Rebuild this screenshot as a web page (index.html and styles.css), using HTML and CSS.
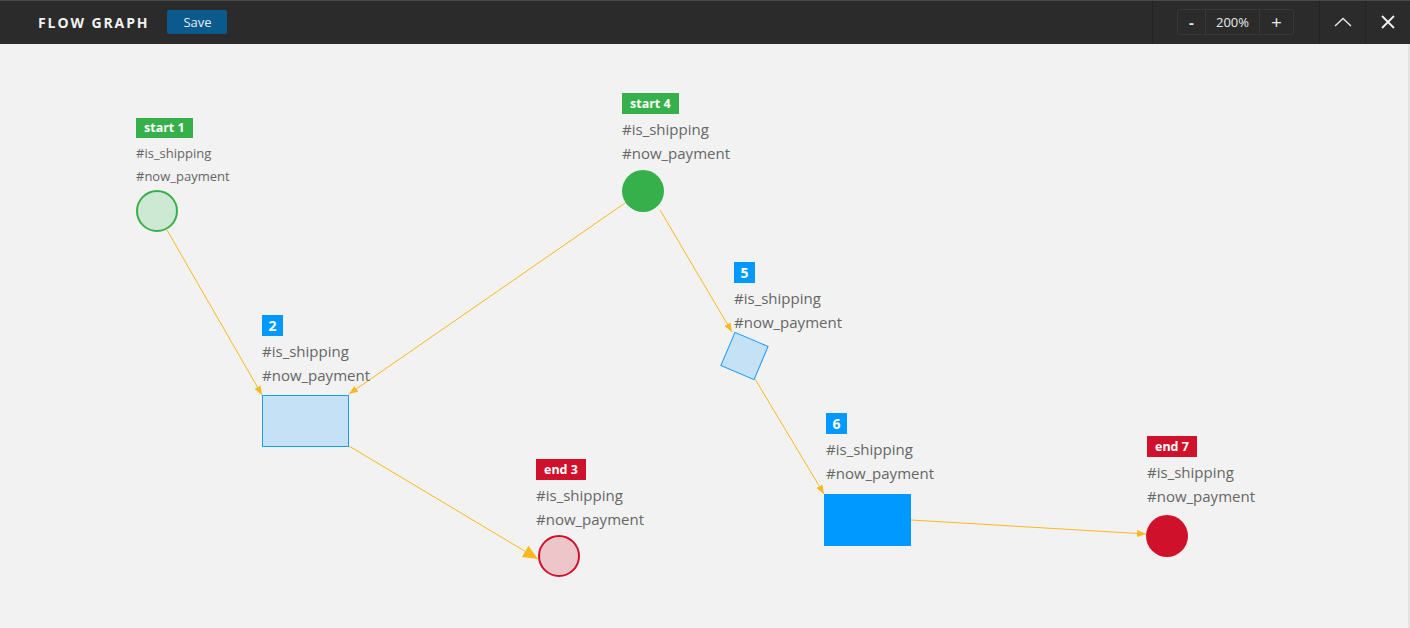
FILE: index.html
```html
<!DOCTYPE html>
<html>
<head>
<meta charset="utf-8">
<link rel="stylesheet" href="styles.css">
</head>
<body>
<div class="app">
  <header class="topbar">
    <div class="brand">
      <span class="title">FLOW GRAPH</span>
      <button class="save">Save</button>
    </div>
    <div class="tools">
      <div class="zoom-cell">
        <div class="zoom">
          <span class="zbtn minus">-</span>
          <span class="zval">200%</span>
          <span class="zbtn plus">+</span>
        </div>
      </div>
      <div class="icon-cell">
        <svg width="18" height="10" viewBox="0 0 18 10"><path d="M1 9 L9 1.5 L17 9" fill="none" stroke="#e8e8e8" stroke-width="1.4"/></svg>
      </div>
      <div class="icon-cell close">
        <svg width="14" height="14" viewBox="0 0 14 14"><path d="M1 1 L13 13 M13 1 L1 13" fill="none" stroke="#f0f0f0" stroke-width="1.8"/></svg>
      </div>
    </div>
  </header>
  <main class="canvas">
    <svg class="graph" width="1410" height="584" viewBox="0 44 1410 584">
      <defs>
        <marker id="sm" markerUnits="userSpaceOnUse" markerWidth="10" markerHeight="8" refX="9" refY="4" orient="auto">
          <path d="M0 0.5 L9 4 L0 7.5 Z" fill="#f9b91c"/>
        </marker>
        <marker id="lg" markerUnits="userSpaceOnUse" markerWidth="16" markerHeight="14" refX="15" refY="7" orient="auto">
          <path d="M0 0.5 L15 7 L0 13.5 Z" fill="#f9b91c"/>
        </marker>
      </defs>
      <g stroke="#f9b91c" stroke-width="1" fill="none">
        <line x1="167" y1="230" x2="262" y2="395" marker-end="url(#sm)"/>
        <line x1="625" y1="203" x2="349" y2="394" marker-end="url(#sm)"/>
        <line x1="660" y1="210" x2="732" y2="332" marker-end="url(#sm)"/>
        <line x1="349" y1="446" x2="538" y2="559" marker-end="url(#lg)"/>
        <line x1="755" y1="379" x2="824" y2="494" marker-end="url(#sm)"/>
        <line x1="911" y1="520" x2="1146" y2="534" marker-end="url(#sm)"/>
      </g>
      <circle cx="157" cy="211" r="20" fill="#cde8d3" stroke="#38b04a" stroke-width="2"/>
      <circle cx="643" cy="191" r="21" fill="#36b04a"/>
      <rect x="262.5" y="395.5" width="86" height="51" fill="#c4e1f5" stroke="#1a9cf5" stroke-width="1"/>
      <rect x="726.5" y="338" width="36" height="36" fill="#c4e1f5" stroke="#1a9cf5" stroke-width="1" transform="rotate(23 744.5 356)"/>
      <rect x="824" y="494" width="87" height="52" fill="#0099ff"/>
      <circle cx="559" cy="556" r="20" fill="#edc6ca" stroke="#d0112b" stroke-width="2"/>
      <circle cx="1167" cy="536" r="21" fill="#d0112b"/>
    </svg>

    <div class="node small n1">
      <span class="badge green">start 1</span>
      <span class="tag">#is_shipping</span>
      <span class="tag">#now_payment</span>
    </div>
    <div class="node n4">
      <span class="badge green">start 4</span>
      <span class="tag">#is_shipping</span>
      <span class="tag">#now_payment</span>
    </div>
    <div class="node n2">
      <span class="badge blue">2</span>
      <span class="tag">#is_shipping</span>
      <span class="tag">#now_payment</span>
    </div>
    <div class="node n5">
      <span class="badge blue">5</span>
      <span class="tag">#is_shipping</span>
      <span class="tag">#now_payment</span>
    </div>
    <div class="node n6">
      <span class="badge blue">6</span>
      <span class="tag">#is_shipping</span>
      <span class="tag">#now_payment</span>
    </div>
    <div class="node n3">
      <span class="badge red">end 3</span>
      <span class="tag">#is_shipping</span>
      <span class="tag">#now_payment</span>
    </div>
    <div class="node n7">
      <span class="badge red">end 7</span>
      <span class="tag">#is_shipping</span>
      <span class="tag">#now_payment</span>
    </div>
  </main>
</div>
</body>
</html>
```

FILE: styles.css
```css
* { box-sizing: border-box; }
html, body {
  margin: 0;
  padding: 0;
  width: 1410px;
  height: 628px;
  overflow: hidden;
  font-family: "Open Sans", "Liberation Sans", sans-serif;
}
.app {
  display: flex;
  flex-direction: column;
  height: 628px;
}
.topbar {
  height: 44px;
  flex: none;
  background: #2b2b2b;
  border-top: 1px solid #4a4a4a;
  display: flex;
  align-items: stretch;
  justify-content: space-between;
}
.brand {
  display: flex;
  align-items: center;
  padding-left: 38px;
  gap: 18px;
}
.title {
  color: #f2f2f2;
  font-weight: 700;
  font-size: 14px;
  letter-spacing: 1.9px;
}
.save {
  height: 24px;
  width: 60px;
  border: none;
  border-radius: 2px;
  background: #0b5a8d;
  color: #e6eef4;
  font-family: "Open Sans", "Liberation Sans", sans-serif;
  font-size: 13px;
  padding: 0;
  margin-top: -2px;
}
.tools {
  display: flex;
  align-items: stretch;
}
.zoom-cell {
  width: 167px;
  border-left: 1px solid #232323;
  display: flex;
  align-items: center;
  padding-left: 24px;
}
.zoom {
  display: flex;
  height: 26px;
  border: 1px solid #383838;
  border-radius: 2px;
  color: #eaeaea;
  font-size: 13px;
  margin-top: -2px;
}
.zbtn, .zval {
  display: flex;
  align-items: center;
  justify-content: center;
}
.zbtn.minus { width: 28px; border-right: 1px solid #383838; font-weight: 700; font-size: 15px; }
.zval { width: 54px; border-right: 1px solid #383838; }
.zbtn.plus { width: 33px; font-size: 19px; }
.icon-cell {
  width: 46px;
  border-left: 1px solid #232323;
  display: flex;
  align-items: center;
  justify-content: center;
  padding-bottom: 2px;
}
.icon-cell.close { width: 45px; }
.canvas {
  position: relative;
  flex: 1;
  background: #f2f2f2;
  border-right: 2px solid #e4e4e4;
}
.graph {
  position: absolute;
  left: 0;
  top: 0;
}
.node {
  position: absolute;
  display: flex;
  flex-direction: column;
  align-items: flex-start;
  color: #666;
  font-size: 15px;
  line-height: 23.5px;
}
.node .badge {
  height: 21px;
  line-height: 21px;
  padding: 0 8px;
  color: #fff;
  font-weight: 700;
  font-size: 12.5px;
  margin-bottom: 4px;
}
.node .badge.blue { background: #0099ff; width: 21px; padding: 0; text-align: center; font-size: 14px; }
.node .badge.green { background: #36b04a; }
.node .badge.red { background: #d0112b; }
.node.small { font-size: 13px; line-height: 23px; }
.node.small .badge { height: 20px; line-height: 20px; margin-bottom: 4px; }
.tag { white-space: nowrap; }

.n1 { left: 136px; top: 74px; }
.n4 { left: 622px; top: 49px; }
.n2 { left: 262px; top: 271px; }
.n5 { left: 734px; top: 218px; }
.n6 { left: 826px; top: 369px; }
.n3 { left: 536px; top: 415px; }
.n7 { left: 1147px; top: 392px; }
```
